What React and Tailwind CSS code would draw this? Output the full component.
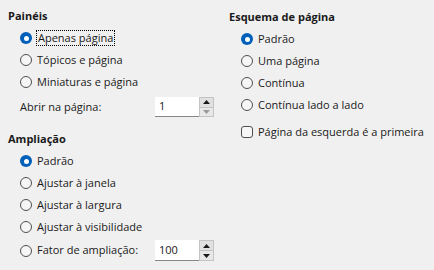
import React from 'react';

const Radio = ({ checked, label, focus }) => (
  <div className="flex items-center h-[22px] pl-3">
    {checked ? (
      <span className="w-[12px] h-[12px] rounded-full bg-[#005fb8] flex items-center justify-center shrink-0">
        <span className="w-[5px] h-[5px] rounded-full bg-white" />
      </span>
    ) : (
      <span className="w-[12px] h-[12px] rounded-full border border-[#4f4f4f] bg-[#f6f6f6] shrink-0" />
    )}
    <span
      className={
        focus
          ? 'ml-[4px] px-[1px] leading-[14px] border border-dotted border-black'
          : 'ml-[5px] leading-[14px]'
      }
    >
      {label}
    </span>
  </div>
);

const Spin = ({ value, atMin, height }) => (
  <div className={`flex ${height}`}>
    <div className="w-[44px] bg-white border-b border-[#868686] flex items-center pl-[4px]">{value}</div>
    <div className="w-[15px] flex flex-col bg-[#f0f0f0]">
      <div className="flex-1 bg-[#e1e1e1] border border-[#c4c4c4] flex items-center justify-center">
        <svg width="7" height="4" viewBox="0 0 7 4"><polygon points="0,4 7,4 3.5,0" fill="#1a1a1a" /></svg>
      </div>
      <div className="flex-1 bg-[#e8e8e8] border border-t-0 border-[#c4c4c4] flex items-center justify-center">
        <svg width="7" height="4" viewBox="0 0 7 4"><polygon points="0,0 7,0 3.5,4" fill={atMin ? '#9a9a9a' : '#1a1a1a'} /></svg>
      </div>
    </div>
  </div>
);

export default function App() {
  return (
    <div
      className="w-[434px] h-[270px] bg-[#f0f0f0] flex text-[11px] text-[#1a1a1a]"
      style={{ fontFamily: '"Open Sans", "Noto Sans", sans-serif' }}
    >
      <div className="w-[217px] pl-2 flex flex-col">
        <div className="mt-[8px] h-[16px] leading-[16px] font-bold">Painéis</div>
        <div className="mt-[3px]">
          <Radio checked focus label="Apenas página" />
          <Radio label="Tópicos e página" />
          <Radio label="Miniaturas e página" />
        </div>
        <div className="mt-[4px] flex items-center pl-3">
          <span className="w-[135px]">Abrir na página:</span>
          <Spin value="1" atMin height="h-[20px]" />
        </div>
        <div className="mt-[14px] h-[16px] leading-[16px] font-bold">Ampliação</div>
        <div className="mt-[3px]">
          <Radio checked label="Padrão" />
          <Radio label="Ajustar à janela" />
          <Radio label="Ajustar à largura" />
          <Radio label="Ajustar à visibilidade" />
        </div>
        <div className="mt-[2px] flex items-center pl-3">
          <span className="w-[12px] h-[12px] rounded-full border border-[#4f4f4f] bg-[#f6f6f6] shrink-0" />
          <span className="ml-[5px] w-[118px]">Fator de ampliação:</span>
          <Spin value="100" height="h-[21px]" />
        </div>
      </div>
      <div className="flex-1 pl-3 flex flex-col">
        <div className="mt-[9px] h-[16px] leading-[16px] font-bold">Esquema de página</div>
        <div className="mt-[3px]">
          <Radio checked label="Padrão" />
          <Radio label="Uma página" />
          <Radio label="Contínua" />
          <Radio label="Contínua lado a lado" />
        </div>
        <div className="mt-[5px] flex items-center h-[22px] pl-3">
          <span className="w-[12px] h-[12px] rounded-[3px] border border-[#4f4f4f] bg-[#f6f6f6] shrink-0" />
          <span className="ml-[5px]">Página da esquerda é a primeira</span>
        </div>
      </div>
    </div>
  );
}
